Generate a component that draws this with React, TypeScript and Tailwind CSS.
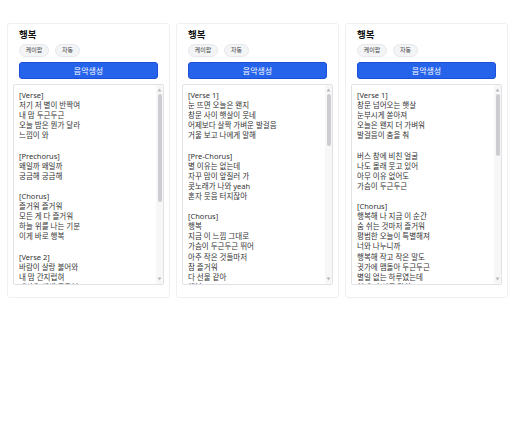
const songs = [
  {
    title: "행복",
    tags: ["케이팝", "자동"],
    thumb: 108,
    lyrics: `[Verse]
저기 저 별이 반짝여
내 맘 두근두근
오늘 밤은 뭔가 달라
느낌이 와

[Prechorus]
왜일까 왜일까
궁금해 궁금해

[Chorus]
즐거워 즐거워
모든 게 다 즐거워
하늘 위를 나는 기분
이게 바로 행복

[Verse 2]
바람이 살랑 불어와
내 맘 간지럽혀
세상은 색색 물들어
웃음이 나`,
  },
  {
    title: "행복",
    tags: ["케이팝", "자동"],
    thumb: 52,
    lyrics: `[Verse 1]
눈 뜨면 오늘은 왠지
창문 사이 햇살이 웃네
어제보다 살짝 가벼운 발걸음
거울 보고 나에게 말해

[Pre-Chorus]
별 이유는 없는데
자꾸 맘이 앞질러 가
콧노래가 나와 yeah
혼자 웃음 터지잖아

[Chorus]
행복
지금 이 느낌 그대로
가슴이 두근두근 뛰어
아주 작은 것들마저
참 즐거워
다 선물 같아
행복
이 순간이 좋아`,
  },
  {
    title: "행복",
    tags: ["케이팝", "자동"],
    thumb: 62,
    lyrics: `[Verse 1]
창문 넘어오는 햇살
눈부시게 쏟아져
오늘은 왠지 더 가벼워
발걸음이 춤을 춰

버스 창에 비친 얼굴
나도 몰래 웃고 있어
아무 이유 없어도
가슴이 두근두근

[Chorus]
행복해 나 지금 이 순간
숨 쉬는 것마저 즐거워
평범한 오늘이 특별해져
너와 나누니까
행복해 작고 작은 말도
귓가에 맴돌아 두근두근
별일 없는 하루였는데
이젠 다 선물 같아`,
  },
];

function ScrollBar({ thumb }: { thumb: number }) {
  return (
    <div className="flex w-[7px] shrink-0 flex-col items-center bg-[#f7f7f8]">
      <svg width="5" height="6" viewBox="0 0 5 6" className="mt-[2px]">
        <path d="M2.5 1.5 L4.5 4.5 L0.5 4.5 Z" fill="#b8b8bc" />
      </svg>
      <div className="mt-[1px] w-[4px] rounded-full bg-[#cdcdd1]" style={{ height: thumb }} />
      <div className="flex-1" />
      <svg width="5" height="6" viewBox="0 0 5 6" className="mb-[2px]">
        <path d="M2.5 4.5 L4.5 1.5 L0.5 1.5 Z" fill="#b8b8bc" />
      </svg>
    </div>
  );
}

function SongCard({ song }: { song: (typeof songs)[number] }) {
  return (
    <div className="flex h-[275px] w-[163px] shrink-0 flex-col rounded-[3px] border border-[#f0f0f2] bg-white px-[5px] pt-[5px]">
      <div className="flex flex-col px-[6px]">
        <h3 className="text-[9.5px] leading-[12px] font-bold text-[#111]">{song.title}</h3>
        <div className="mt-[3px] flex gap-[6px]">
          {song.tags.map((tag, i) => (
            <span
              key={tag}
              className={
                "flex h-[13px] items-center justify-center rounded-full border border-[#e8e8ec] bg-[#f3f4f6] text-[6px] text-[#444] " +
                (i === 0 ? "w-[30px]" : "w-[25px]")
              }
            >
              {tag}
            </span>
          ))}
        </div>
        <button className="mt-[5px] h-[17px] w-full rounded-[3px] border border-[#1d4ed8] bg-[#2563eb] text-[8px] leading-none text-white">
          음악생성
        </button>
      </div>
      <div className="mt-[5px] flex h-[201px] overflow-hidden rounded-[2px] border border-[#e2e2e6]">
        <div className="flex-1 overflow-hidden whitespace-pre-line px-[5px] pt-[5px] text-[7.5px] leading-[10.1px] text-[#333]">
          {song.lyrics}
        </div>
        <ScrollBar thumb={song.thumb} />
      </div>
    </div>
  );
}

export default function App() {
  return (
    <div
      className="h-[448px] w-[508px] overflow-hidden bg-white"
      style={{ fontFamily: '"Noto Sans", "Noto Sans CJK KR", sans-serif' }}
    >
      <div className="flex gap-[6px] pl-[7px] pt-[23px]">
        {songs.map((song, i) => (
          <SongCard key={i} song={song} />
        ))}
      </div>
    </div>
  );
}
